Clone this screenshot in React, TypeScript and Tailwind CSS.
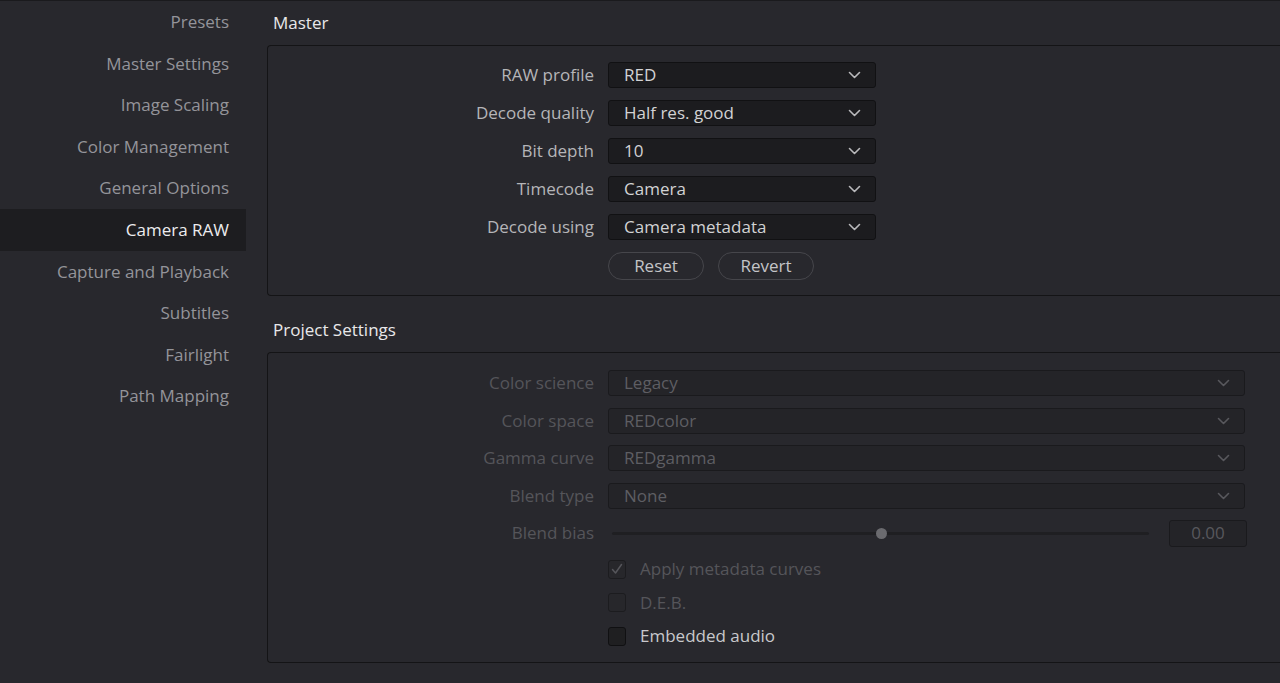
import { FC, ReactNode } from "react";

const navItems = [
    "Presets",
    "Master Settings",
    "Image Scaling",
    "Color Management",
    "General Options",
    "Camera RAW",
    "Capture and Playback",
    "Subtitles",
    "Fairlight",
    "Path Mapping",
];

const Chevron: FC<{ color: string }> = ({ color }) => (
    <svg width="13" height="8" viewBox="0 0 13 8" fill="none">
        <path d="M1.5 1.5L6.5 6.5L11.5 1.5" stroke={color} strokeWidth="1.6" strokeLinecap="round" strokeLinejoin="round" />
    </svg>
);

const Row: FC<{ label: string; disabled?: boolean; children: ReactNode }> = ({ label, disabled, children }) => (
    <div className="flex items-center h-[26px]">
        <div className={`w-[340px] shrink-0 pr-[14px] text-right ${disabled ? "text-[#55555a]" : "text-[#b5b5b8]"}`}>{label}</div>
        {children}
    </div>
);

const Select: FC<{ value: string; wide?: boolean; disabled?: boolean }> = ({ value, wide, disabled }) => (
    <div
        className={`h-[26px] flex items-center justify-between pl-[15px] pr-[14px] rounded-[3px] border ${
            wide ? "w-[637px]" : "w-[268px]"
        } ${disabled ? "bg-[#242428] border-[#1a1a1d] text-[#5e5e63]" : "bg-[#1c1c1f] border-[#111113] text-[#d2d2d4]"}`}
    >
        <span>{value}</span>
        <Chevron color={disabled ? "#58585d" : "#b9b9bc"} />
    </div>
);

const Check: FC<{ label: string; checked?: boolean; disabled?: boolean }> = ({ label, checked, disabled }) => (
    <div className="flex items-center h-[26px] pl-[340px]">
        <div
            className={`w-[18px] h-[19px] rounded-[3px] border flex items-center justify-center ${
                disabled ? "bg-[#27272b] border-[#1c1c1f]" : "bg-[#1f1f21] border-[#101012]"
            }`}
        >
            {checked && (
                <svg width="12" height="12" viewBox="0 0 12 12" fill="none">
                    <path d="M1.5 6.5L4.5 10L10.5 1.5" stroke="#56565b" strokeWidth="1.5" strokeLinecap="round" strokeLinejoin="round" />
                </svg>
            )}
        </div>
        <span className={`ml-[14px] ${disabled ? "text-[#55555a]" : "text-[#c9c9cc]"}`}>{label}</span>
    </div>
);

export default function App() {
    return (
        <div
            className="w-[1280px] h-[683px] overflow-hidden bg-[#28282d] border-t border-[#1a1a1d] flex text-[17px]"
            style={{ fontFamily: '"Open Sans", "Noto Sans", sans-serif' }}
        >
            {/* sidebar */}
            <div className="w-[246px] shrink-0 flex flex-col">
                {navItems.map((item) => (
                    <div
                        key={item}
                        className={`h-[41.6px] flex items-center justify-end pr-[17px] ${
                            item === "Camera RAW" ? "bg-[#1d1d20] text-[#ececee]" : "text-[#94949a]"
                        }`}
                    >
                        {item}
                    </div>
                ))}
            </div>

            {/* main */}
            <div className="flex-1 pl-[21px] flex flex-col">
                <div className="pl-[6px] pt-[11px] pb-[11px] text-[#e8e8ea] leading-[22px]">Master</div>
                <div className="h-[251px] border border-r-0 border-[#141416] rounded-l-[4px] pt-[16px] flex flex-col gap-[12px]">
                    <Row label="RAW profile"><Select value="RED" /></Row>
                    <Row label="Decode quality"><Select value="Half res. good" /></Row>
                    <Row label="Bit depth"><Select value="10" /></Row>
                    <Row label="Timecode"><Select value="Camera" /></Row>
                    <Row label="Decode using"><Select value="Camera metadata" /></Row>
                    <div className="flex pl-[340px] gap-[14px]">
                        <button className="w-[96px] h-[28px] rounded-full border border-[#46464b] text-[#c4c4c7]">Reset</button>
                        <button className="w-[96px] h-[28px] rounded-full border border-[#46464b] text-[#c4c4c7]">Revert</button>
                    </div>
                </div>

                <div className="pl-[6px] pt-[23px] pb-[11px] text-[#e8e8ea] leading-[22px]">Project Settings</div>
                <div className="h-[311px] border border-r-0 border-[#141416] rounded-l-[4px] pt-[17px] flex flex-col">
                    <div className="flex flex-col gap-[11.5px]">
                        <Row label="Color science" disabled><Select value="Legacy" wide disabled /></Row>
                        <Row label="Color space" disabled><Select value="REDcolor" wide disabled /></Row>
                        <Row label="Gamma curve" disabled><Select value="REDgamma" wide disabled /></Row>
                        <Row label="Blend type" disabled><Select value="None" wide disabled /></Row>
                        <Row label="Blend bias" disabled>
                            <div className="flex items-center">
                                <div className="relative w-[537px] ml-[4px] h-[3px] bg-[#1f1f22] rounded-full">
                                    <div className="absolute left-[264px] top-[-4px] w-[11px] h-[11px] rounded-full bg-[#6b6b6f]" />
                                </div>
                                <div className="ml-[20px] w-[78px] h-[27px] rounded-[3px] border border-[#1a1a1d] bg-[#242428] text-[#58585d] flex items-center justify-center">
                                    0.00
                                </div>
                            </div>
                        </Row>
                    </div>
                    <div className="flex flex-col gap-[7.5px] mt-[10px]">
                        <Check label="Apply metadata curves" checked disabled />
                        <Check label="D.E.B." disabled />
                        <Check label="Embedded audio" />
                    </div>
                </div>
            </div>
        </div>
    );
}
